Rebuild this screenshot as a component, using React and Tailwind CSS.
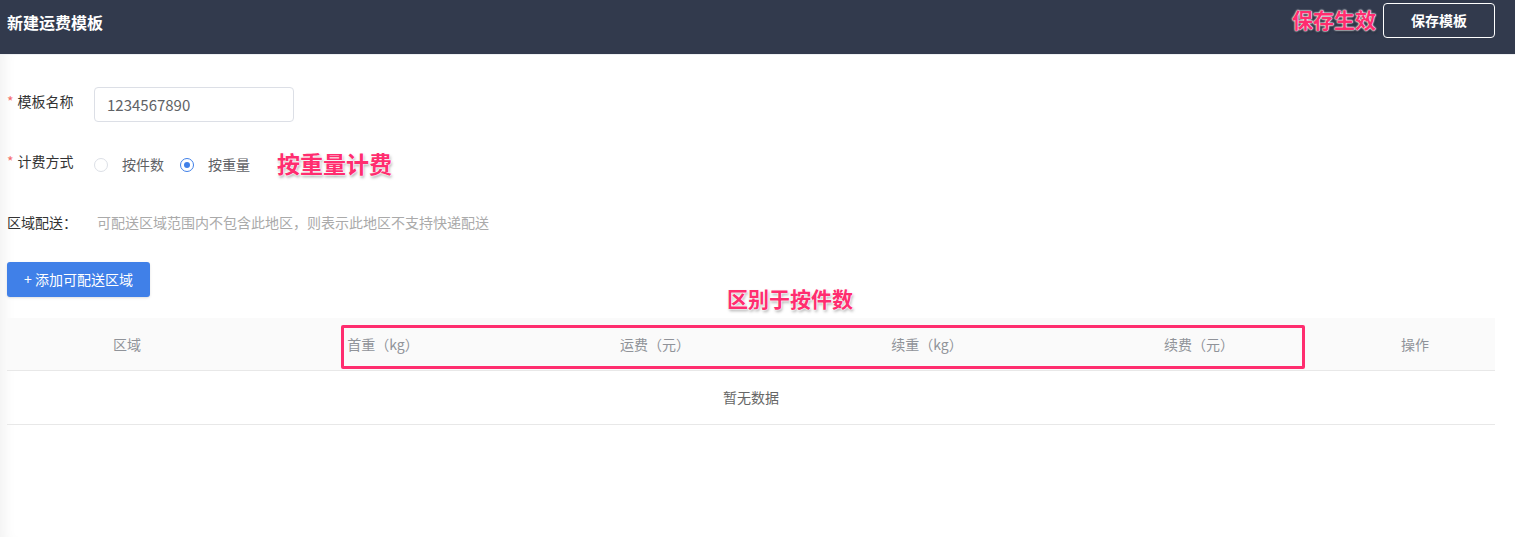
import React, { useState } from 'react';

const font = "font-['PingFang_SC','Noto_Sans_CJK_SC',sans-serif]";
const note =
  "font-bold text-[#ff2d6f] [text-shadow:0_0_1px_#fff,0_0_2px_#fff,0_0_2px_#fff,1px_2px_3px_rgba(0,0,0,0.35)]";

const columns = [
  { key: 'area', label: '区域', className: 'w-[240px] justify-center' },
  { key: 'first', label: '首重（kg）', className: 'w-[272px] justify-center' },
  { key: 'firstFee', label: '运费（元）', className: 'w-[272px] justify-center' },
  { key: 'next', label: '续重（kg）', className: 'w-[272px] justify-center' },
  { key: 'nextFee', label: '续费（元）', className: 'w-[272px] justify-center' },
  { key: 'op', label: '操作', className: 'flex-1 justify-center' },
];

const Radio = ({ checked, label, onClick }) => (
  <label className="flex items-center cursor-pointer" onClick={onClick}>
    <span
      className={`w-[14px] h-[14px] rounded-full border flex items-center justify-center ${
        checked ? 'border-[#4080e8]' : 'border-[#dcdfe6]'
      }`}
    >
      {checked && <span className="w-[6px] h-[6px] rounded-full bg-[#4080e8]" />}
    </span>
    <span className="ml-[14px] text-[14px] text-[#606266]">{label}</span>
  </label>
);

const App = () => {
  const [mode, setMode] = useState('weight');
  const [name, setName] = useState('1234567890');

  return (
    <div className={`min-h-[537px] bg-white ${font}`}>
      <header className="h-[55px] bg-[#323a4d] flex items-center justify-between pl-[7px] pr-[20px] border-b border-[#eef0f3]">
        <h1 className="text-white text-[16px] font-bold -mt-[10px]">新建运费模板</h1>
        <div className="flex items-center -mt-[14px]">
          <span className={`${note} text-[21px] mr-[7px]`}>保存生效</span>
          <button className="w-[112px] h-[35px] border border-white rounded-[4px] text-white text-[14px] font-bold">
            保存模板
          </button>
        </div>
      </header>

      <main className="pl-[7px] pr-[20px] pt-[32px] shadow-[inset_14px_0_14px_-10px_rgba(0,0,0,0.06)] min-h-[482px]">
        <div className="flex items-center h-[35px]">
          <span className="w-[87px] text-[14px] text-[#333] -mt-[6px]">
            <span className="text-[#f56c6c] mr-[4px]">*</span>模板名称
          </span>
          <input
            value={name}
            onChange={(e) => setName(e.target.value)}
            className="w-[200px] h-[35px] border border-[#dcdfe6] rounded-[4px] px-[12px] text-[15px] text-[#606266] outline-none"
          />
        </div>

        <div className="flex items-center h-[35px] mt-[25px]">
          <span className="w-[87px] text-[14px] text-[#333] -mt-[6px]">
            <span className="text-[#f56c6c] mr-[4px]">*</span>计费方式
          </span>
          <Radio checked={mode === 'piece'} label="按件数" onClick={() => setMode('piece')} />
          <span className="w-[16px]" />
          <Radio checked={mode === 'weight'} label="按重量" onClick={() => setMode('weight')} />
          <span className={`${note} text-[23px] ml-[27px] -mt-[2px]`}>按重量计费</span>
        </div>

        <div className="flex items-center mt-[25px] h-[30px] text-[14px]">
          <span className="w-[90px] text-[#333]">区域配送：</span>
          <span className="text-[#aaa]">可配送区域范围内不包含此地区，则表示此地区不支持快递配送</span>
        </div>

        <button className="mt-[25px] w-[143px] h-[35px] bg-[#4080e8] rounded-[3px] text-white text-[14px] shadow-sm">
          + 添加可配送区域
        </button>

        <div className="relative mt-[21px]">
          <span className={`${note} text-[21px] absolute left-[720px] -top-[30px] leading-none`}>区别于按件数</span>
          <div className="absolute left-[334px] top-[7px] w-[964px] h-[44px] border-[3px] border-[#ff2d6f] rounded-[2px] pointer-events-none" />
          <div className="flex h-[53px] bg-[#fafafa] border-b border-[#e8e8e8]">
            {columns.map((c) => (
              <div key={c.key} className={`flex items-center text-[14px] text-[#909399] ${c.className}`}>
                {c.label}
              </div>
            ))}
          </div>
          <div className="h-[54px] flex items-center justify-center border-b border-[#e8e8e8] text-[14px] text-[#666]">
            暂无数据
          </div>
        </div>
      </main>
    </div>
  );
};

export default App;
